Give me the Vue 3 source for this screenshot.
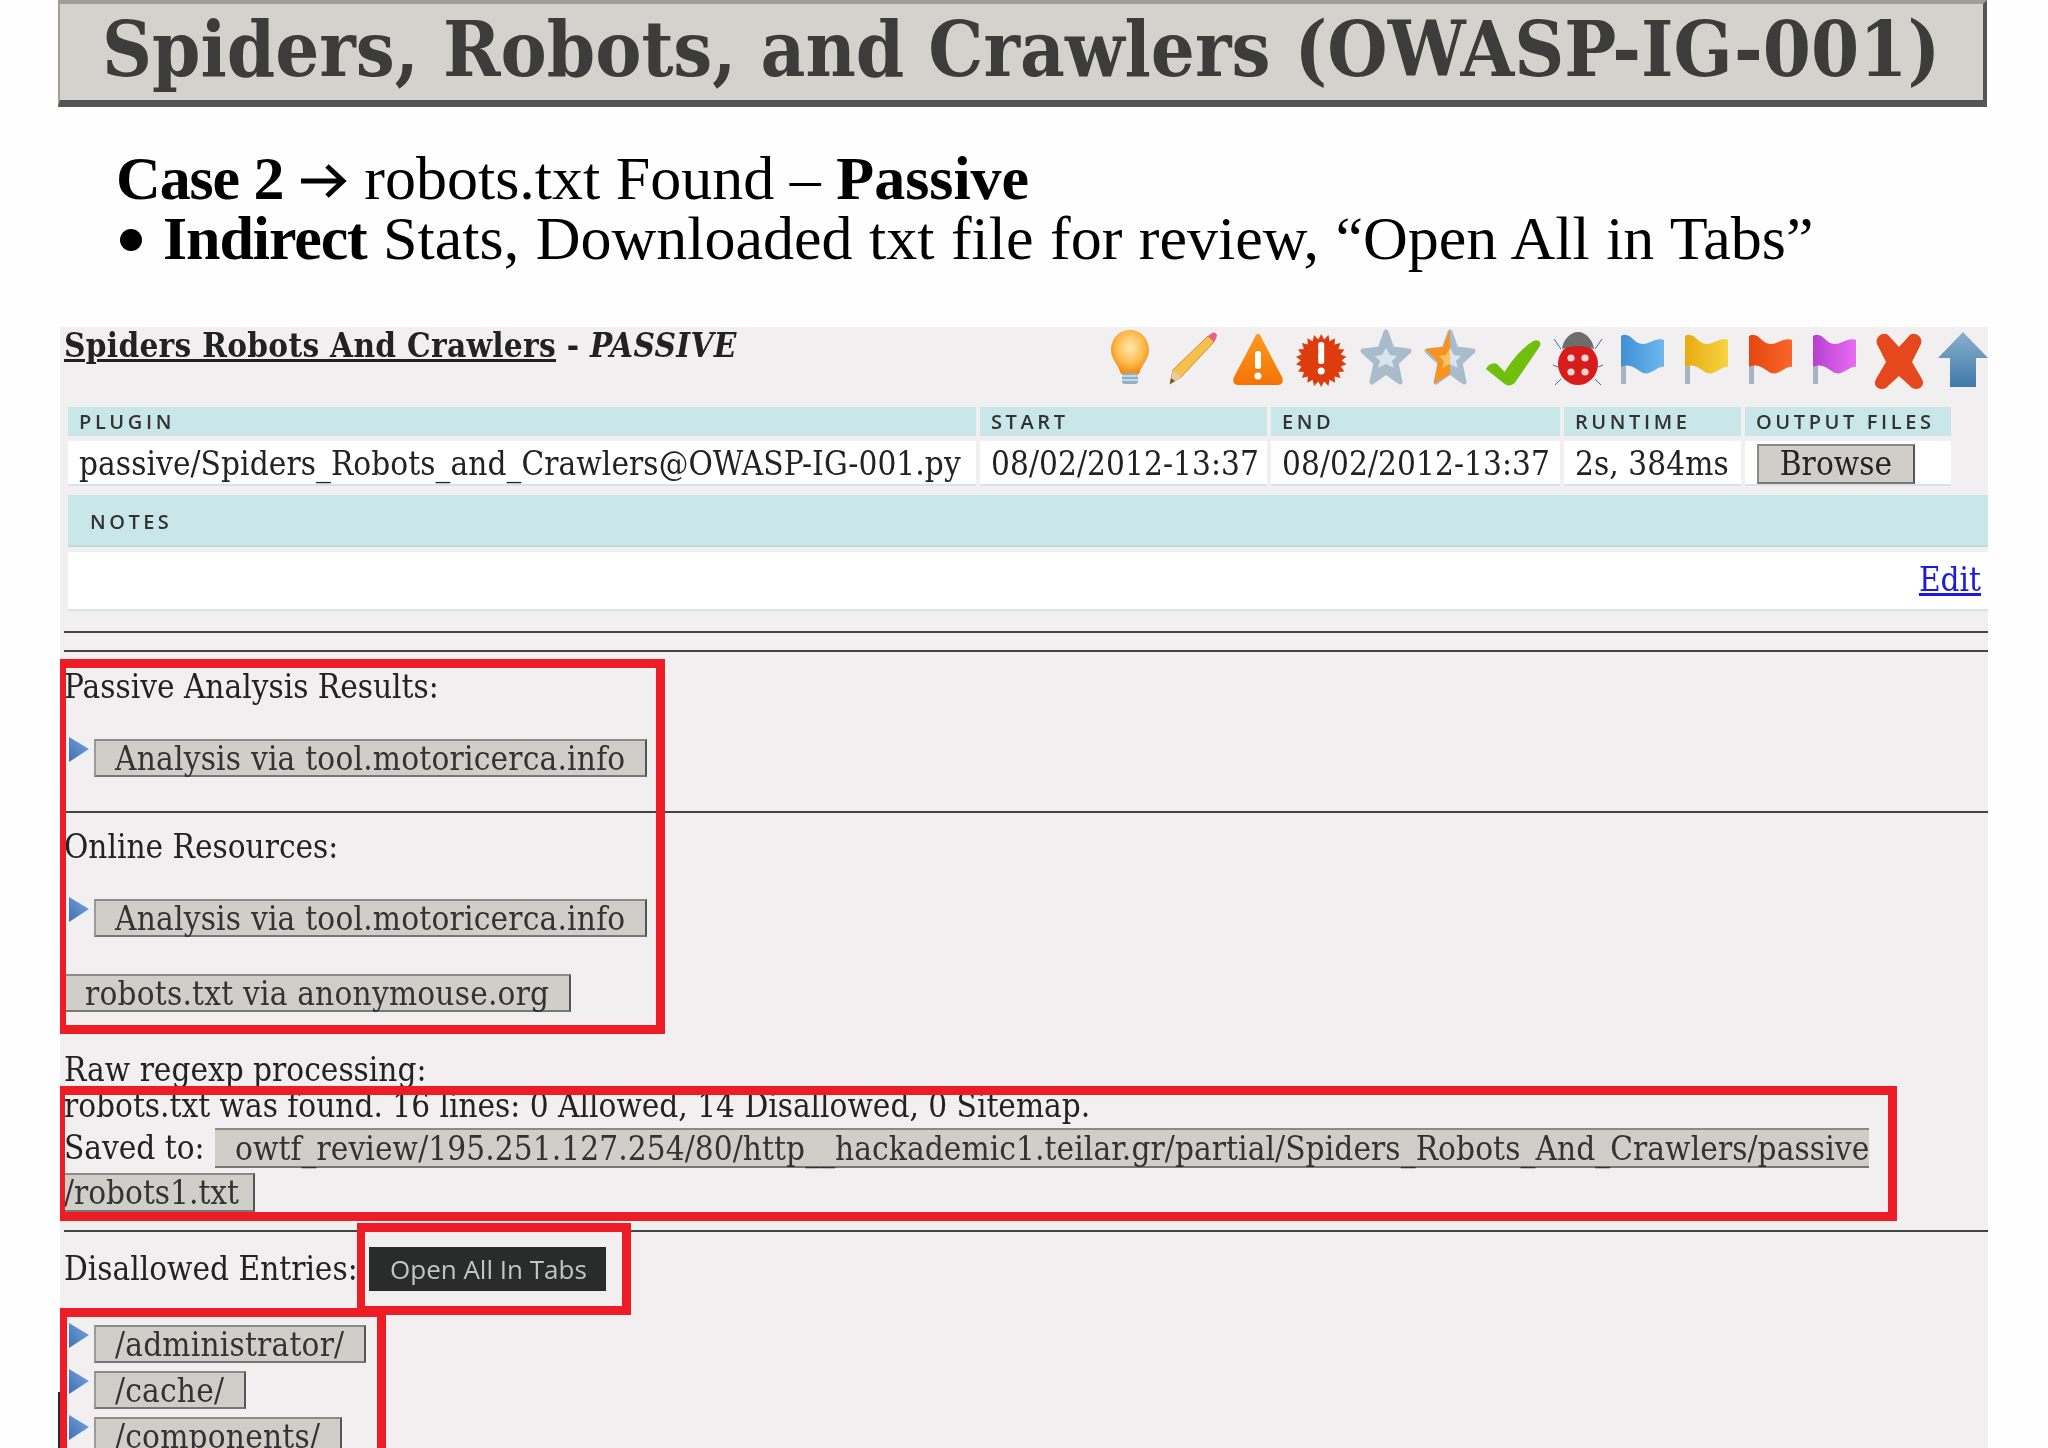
<script setup>
const stats = [
  { label: 'PLUGIN', value: 'passive/Spiders_Robots_and_Crawlers@OWASP-IG-001.py' },
  { label: 'START', value: '08/02/2012-13:37' },
  { label: 'END', value: '08/02/2012-13:37' },
  { label: 'RUNTIME', value: '2s, 384ms' },
]
const flags = [
  { id: 'fb', a: '#3f8fd6', b: '#6cb8ee' },
  { id: 'fy', a: '#e8ab12', b: '#f7d441' },
  { id: 'fo', a: '#e4470f', b: '#f8662a' },
  { id: 'fp', a: '#b83fd0', b: '#e86cf4' },
]
const disallowed = ['/administrator/', '/cache/', '/components/']
const starPoints = '25,5 31,22 48,24 35,36 39,55 25,45 11,55 15,36 2,24 19,22'

// spiky badge outline for the "important" icon
const burstPoints = Array.from({ length: 44 }, (_, i) => {
  const a = (i / 44) * Math.PI * 2
  const k = i % 2 ? 0.8 : 1
  return `${(24.2 + Math.sin(a) * 25.5 * k).toFixed(1)},${(33.5 - Math.cos(a) * 26.5 * k).toFixed(1)}`
}).join(' ')
</script>

<template>
  <div class="page">
    <h1 class="title">Spiders, Robots, and Crawlers (OWASP-IG-001)</h1>

    <div class="intro">
      <div>
        <b class="tight">Case 2</b><svg class="arr" viewBox="0 0 48 36"><path d="M2 18h40M28 3l16 15-16 15" fill="none" stroke="#000" stroke-width="5" /></svg>robots.txt Found – <b>Passive</b>
      </div>
      <div class="second-line"><span class="dot"></span><b class="tight">Indirect</b> Stats, Downloaded txt file for review, “Open All in Tabs”</div>
    </div>

    <div class="panel">
      <div class="head">
        <div class="heading"><u>Spiders Robots And Crawlers</u> - <i>PASSIVE</i></div>
        <div class="icons">
          <svg viewBox="0 0 50 64">
            <defs>
              <radialGradient id="bulb" cx="0.5" cy="0.4" r="0.6">
                <stop offset="0" stop-color="#ffe9b0" />
                <stop offset="0.6" stop-color="#fdbb4c" />
                <stop offset="1" stop-color="#f08a10" />
              </radialGradient>
              <linearGradient id="tip" x1="0" y1="1" x2="1" y2="0">
                <stop offset="0" stop-color="#3f6fb5" />
                <stop offset="1" stop-color="#79a8dc" />
              </linearGradient>
            </defs>
            <path d="M25 3C13 3 6 13 6 23c0 9 7 14 10 24h18c3-10 10-15 10-24C44 13 37 3 25 3z" fill="url(#bulb)" />
            <rect x="17" y="46" width="16" height="11" rx="3" fill="#8fb0c8" />
            <path d="M17 49h16M17 53h16" stroke="#d7e4ec" stroke-width="1.5" />
          </svg>
          <svg viewBox="0 0 50 64">
            <path d="M1 57l3-14L39 9l6 6L12 50z" fill="#f6c04e" stroke="#d98a1c" stroke-width="1" />
            <path d="M4 43l8 7-11 7z" fill="#e8cda0" />
            <path d="M1 57l1-6 4 3z" fill="#6b5a3a" />
            <path d="M39 9l4-3c2-1 4 0 5 2l-1 4-2 3z" fill="#e8608a" />
          </svg>
          <svg viewBox="0 0 50 64">
            <defs>
              <linearGradient id="tri" x1="0" y1="0" x2="0" y2="1">
                <stop offset="0" stop-color="#fb9a1e" />
                <stop offset="1" stop-color="#f57205" />
              </linearGradient>
            </defs>
            <path d="M25 7c2 0 3 2 4 5l20 38c2 5 0 8-5 8H6c-5 0-7-3-5-8l20-38c1-3 2-5 4-5z" fill="url(#tri)" />
            <rect x="22" y="24" width="6" height="18" rx="2.5" fill="#fff" />
            <circle cx="25" cy="49" r="3.5" fill="#fff" />
          </svg>
          <svg viewBox="0 0 50 64">
            <polygon :points="burstPoints" fill="#dc3c0e" />
            <rect x="21.2" y="15" width="6" height="22" rx="2.5" fill="#fff" />
            <circle cx="24.2" cy="44" r="3.5" fill="#fff" />
          </svg>
          <svg viewBox="0 0 50 64">
            <polygon :points="starPoints" fill="#a9bccb" stroke="#a9bccb" stroke-width="5" stroke-linejoin="round" />
            <polygon points="25,21 29,28 36,29 31,34 33,41 25,37 17,41 19,34 14,29 21,28" fill="#d8e4ee" />
          </svg>
          <svg viewBox="0 0 50 64">
            <polygon :points="starPoints" fill="#a9bccb" stroke="#a9bccb" stroke-width="5" stroke-linejoin="round" />
            <polygon points="25,21 29,28 36,29 31,34 33,41 25,37" fill="#d8e4ee" />
            <path d="M25 2L18 20 0 22l13 13-4 22 16-10z" fill="#f7931e" />
            <polygon points="25,21 21,28 14,29 19,34 17,41 25,37" fill="#fbc35e" />
          </svg>
          <svg viewBox="0 0 50 64">
            <path d="M0 42c2-5 7-7 10-5l7 8C24 32 33 21 43 14c4-2 8 1 6 5-7 12-16 26-23 37-3 3-7 3-9 1z" fill="#6fbf0c" transform="translate(-3 0) scale(1.1 1)" />
          </svg>
          <svg viewBox="0 0 50 64">
            <path d="M8 22L1 12M42 22l7-10M5 40l-5-2M45 40l5-2M8 52l-6 6M42 52l6 6" stroke="#3a6ea8" stroke-width="1" fill="none" />
            <ellipse cx="25" cy="37" rx="20" ry="21" fill="#d81c1c" />
            <path d="M9 22c1-9 8-17 16-17s15 8 16 17c-10-4-22-4-32 0z" fill="#6d6d6d" />
            <circle cx="18" cy="31" r="3.6" fill="#f5d6d6" />
            <circle cx="32" cy="31" r="3.6" fill="#f5d6d6" />
            <circle cx="18" cy="45" r="3.6" fill="#f5d6d6" />
            <circle cx="32" cy="45" r="3.6" fill="#f5d6d6" />
          </svg>
          <svg v-for="flag in flags" :key="flag.id" viewBox="0 0 50 64">
            <defs>
              <linearGradient :id="flag.id" x1="0" y1="0" x2="1" y2="0">
                <stop offset="0" :stop-color="flag.a" />
                <stop offset="1" :stop-color="flag.b" />
              </linearGradient>
            </defs>
            <rect x="3" y="30" width="5" height="27" fill="#a4b4c0" />
            <path d="M3 9c5-3 9 0 13 4 4 4 9 5 14 3 5-2 11-5 16-3v27c-5-1-9 4-15 6-7 2-11-4-16-6-4-2-9-2-12 0z" :fill="`url(#${flag.id})`" />
          </svg>
          <svg viewBox="0 0 50 64">
            <path d="M5 10c3-3 8-3 10 0l10 11 10-11c2-3 7-3 10 0 3 3 3 7 1 10L38 36l10 17c2 4 1 7-2 9-3 2-8 1-10-2L25 50 14 60c-2 3-7 4-10 2-3-2-4-5-2-9l10-17L4 20c-2-3-2-7 1-10z" fill="#e4481c" transform="translate(0 -1)" />
          </svg>
          <svg viewBox="0 0 50 64">
            <defs>
              <linearGradient id="up" x1="0" y1="0" x2="0" y2="1">
                <stop offset="0" stop-color="#8cb0cc" />
                <stop offset="1" stop-color="#3c7aa8" />
              </linearGradient>
            </defs>
            <path d="M25 5L50 31H38v29H12V31H0z" fill="url(#up)" />
          </svg>
        </div>
      </div>

      <div class="stats">
        <div v-for="s in stats" :key="s.label" class="th">{{ s.label }}</div>
        <div class="th">OUTPUT FILES</div>
        <div v-for="s in stats" :key="s.value + s.label" class="td">{{ s.value }}</div>
        <div class="td"><span class="browse">Browse</span></div>
      </div>

      <div class="notes-head">NOTES</div>
      <div class="notes-body"><a class="edit" href="#">Edit</a></div>

      <hr class="rule first" />
      <hr class="rule second" />

      <div class="label l-passive">Passive Analysis Results:</div>
      <div class="link-row r-passive">
        <svg class="tri" viewBox="0 0 20 25"><polygon points="0,0 20,12 0,25" fill="url(#tip)" /></svg>
        <span class="btn">Analysis via tool.motoricerca.info</span>
      </div>

      <hr class="rule third" />

      <div class="label l-online">Online Resources:</div>
      <div class="link-row r-online">
        <svg class="tri" viewBox="0 0 20 25"><polygon points="0,0 20,12 0,25" fill="url(#tip)" /></svg>
        <span class="btn">Analysis via tool.motoricerca.info</span>
      </div>
      <div class="r-anon"><span class="btn">robots.txt via anonymouse.org</span></div>

      <div class="label l-raw">Raw regexp processing:</div>
      <div class="label l-found">robots.txt was found. 16 lines: 0 Allowed, 14 Disallowed, 0 Sitemap.</div>
      <div class="saved">
        <span class="saved-label">Saved to:</span>
        <span class="btn path">owtf_review/195.251.127.254/80/http__hackademic1.teilar.gr/partial/Spiders_Robots_And_Crawlers/passive</span>
      </div>
      <div class="r-file"><span class="btn file">/robots1.txt</span></div>

      <hr class="rule fourth" />

      <div class="entries">
        <span class="label entries-label">Disallowed Entries:</span>
        <span class="open-all">Open All In Tabs</span>
      </div>

      <div class="list">
        <div v-for="d in disallowed" :key="d" class="link-row">
          <svg class="tri" viewBox="0 0 20 25"><polygon points="0,0 20,12 0,25" fill="url(#tip)" /></svg>
          <span class="btn">{{ d }}</span>
        </div>
      </div>
    </div>

    <!-- red annotation boxes drawn over the screenshot -->
    <div class="mark m1"></div>
    <div class="mark m2"></div>
    <div class="mark m4"></div>
    <div class="mark m3"></div>
    <div class="edge"></div>
  </div>
</template>

<style>
html,
body {
  margin: 0;
  background: #fff;
}
</style>

<style scoped>
.page {
  position: relative;
  width: 2048px;
  height: 1448px;
  overflow: hidden;
  background: #fefefe;
  font-family: "DejaVu Serif Condensed", "DejaVu Serif", serif;
  font-stretch: condensed;
  color: #222;
  filter: blur(0.5px);
}

.title {
  box-sizing: border-box;
  width: 1929px;
  height: 107px;
  margin: 0 0 0 58px;
  padding-left: 42px;
  background: #d4d2cc;
  border-top: 4px solid #a09e98;
  border-left: 2px solid #a09e98;
  border-right: 4px solid #555;
  border-bottom: 7px solid #555;
  font-size: 77px;
  line-height: 90px;
  font-weight: bold;
  color: #3c3c3a;
  white-space: nowrap;
}

.intro {
  height: 220px;
  padding: 41px 0 0 116px;
  box-sizing: border-box;
  font-family: "Liberation Serif", serif;
  font-stretch: normal;
  font-size: 62px;
  line-height: 60px;
  color: #000;
}

.tight {
  letter-spacing: -1.1px;
}

.second-line {
  word-spacing: 1px;
}

.arr {
  width: 48px;
  height: 36px;
  margin: 0 17px 0 16px;
}

.dot {
  display: inline-block;
  width: 22px;
  height: 22px;
  margin: 0 21px 8px 4px;
  border-radius: 50%;
  background: #000;
}

.panel {
  box-sizing: border-box;
  width: 1928px;
  height: 1121px;
  margin-left: 60px;
  padding-left: 4px;
  background: #f1efef;
  font-size: 33px;
  line-height: 40px;
}

.head {
  display: flex;
  justify-content: space-between;
  height: 80px;
}

.heading {
  font-weight: bold;
  line-height: 38px;
  letter-spacing: 0.3px;
}

.icons {
  display: flex;
  gap: 14.1px;
}

.icons svg {
  width: 50px;
  height: 64px;
  flex: none;
  overflow: visible;
}

.stats {
  display: grid;
  grid-template-columns: 908px 287px 289px 177px 206px;
  grid-template-rows: 29px 45px;
  gap: 5px 4px;
  margin-left: 4px;
}

.th {
  padding-left: 11px;
  background: #c9e6e9;
  font-family: "Open Sans", sans-serif;
  font-stretch: normal;
  font-size: 20px;
  font-weight: 600;
  line-height: 29px;
  letter-spacing: 3.6px;
  color: #333;
}

.td {
  padding-left: 11px;
  background: #fff;
  border-bottom: 2px solid #d6e4e4;
  box-sizing: border-box;
  line-height: 45px;
  letter-spacing: 0.08px;
  white-space: nowrap;
}

.browse {
  display: inline-block;
  box-sizing: border-box;
  width: 158px;
  height: 40px;
  margin: 3px 0 0 1px;
  background: #d0cec8;
  border-top: 2px solid #8a8a86;
  border-left: 2px solid #8a8a86;
  border-right: 2px solid #555;
  border-bottom: 2px solid #777;
  text-align: center;
  line-height: 36px;
  vertical-align: top;
}

.notes-head {
  box-sizing: border-box;
  height: 52px;
  margin: 9px 0 5px 4px;
  padding-left: 22px;
  background: #c9e6e9;
  border-bottom: 2px solid #bcdcd8;
  font-family: "Open Sans", sans-serif;
  font-stretch: normal;
  font-size: 20px;
  font-weight: 600;
  line-height: 54px;
  letter-spacing: 3.5px;
  color: #333;
}

.notes-body {
  box-sizing: border-box;
  height: 59px;
  margin-left: 4px;
  padding-right: 7px;
  background: #fff;
  border-bottom: 2px solid #d6e4e4;
  text-align: right;
  line-height: 56px;
}

.edit {
  color: #1a1ae0;
}

.rule {
  height: 2px;
  margin: 0;
  border: 0;
  background: #444;
}

.first {
  margin-top: 20px;
}

.second {
  margin-top: 17px;
}

.third {
  margin-top: 34px;
}

.fourth {
  margin-top: 18px;
}

.label {
  white-space: nowrap;
}

.l-passive {
  margin-top: 15px;
}

.l-online {
  margin-top: 14px;
}

.l-raw {
  margin-top: 37px;
}

.l-found {
  margin-top: -4px;
}

.link-row {
  display: flex;
  gap: 5px;
  padding-left: 5px;
}

.r-passive,
.r-online {
  margin-top: 32px;
}

.tri {
  width: 20px;
  height: 25px;
  margin-top: -2px;
  flex: none;
}

.btn {
  display: inline-block;
  box-sizing: border-box;
  height: 38px;
  padding: 0 20px 0 19px;
  background: #d0cec8;
  border-top: 2px solid #8a8a86;
  border-left: 2px solid #9a9a96;
  border-right: 2px solid #555;
  border-bottom: 2px solid #777;
  line-height: 36px;
  letter-spacing: 0.22px;
  color: #333;
  white-space: nowrap;
}

.r-anon {
  height: 39px;
  margin-top: 37px;
}

.saved {
  display: flex;
  height: 40px;
  margin-top: 2px;
  line-height: 40px;
}

.saved-label {
  flex: none;
  width: 151px;
}

.path {
  flex: none;
  height: 40px;
  padding: 0 0 0 20px;
  border-left: 0;
  border-right: 0;
  line-height: 38px;
  letter-spacing: 0.1px;
}

.r-file {
  margin-top: 5px;
  height: 39px;
}

.file {
  height: 39px;
  padding: 0 14px 0 0;
  border-left: 0;
  letter-spacing: 0;
}

.entries {
  display: flex;
  align-items: center;
  height: 44px;
  margin-top: 15px;
}

.entries-label {
  flex: none;
  width: 305px;
}

.open-all {
  box-sizing: border-box;
  width: 237px;
  height: 44px;
  padding-left: 21px;
  background: #2a2b2b;
  font-family: "Open Sans", sans-serif;
  font-stretch: normal;
  font-size: 26px;
  line-height: 44px;
  color: #c4c4c4;
  white-space: nowrap;
}

.list {
  display: flex;
  flex-direction: column;
  gap: 8px;
  margin-top: 34px;
}

.mark {
  position: absolute;
  box-sizing: border-box;
  border: 9px solid #ee1c25;
}

.m1 {
  left: 60px;
  top: 659px;
  width: 605px;
  height: 375px;
  border-left-width: 6px;
}

.m2 {
  left: 60px;
  top: 1086px;
  width: 1837px;
  height: 135px;
  border-left-width: 5px;
}

.m3 {
  left: 357px;
  top: 1223px;
  width: 274px;
  height: 92px;
  border-left-width: 8px;
}

.m4 {
  left: 60px;
  top: 1308px;
  width: 326px;
  height: 160px;
  border-left-width: 7px;
}

.edge {
  position: absolute;
  left: 58px;
  top: 1392px;
  width: 2px;
  height: 56px;
  background: #1f2a44;
}
</style>
